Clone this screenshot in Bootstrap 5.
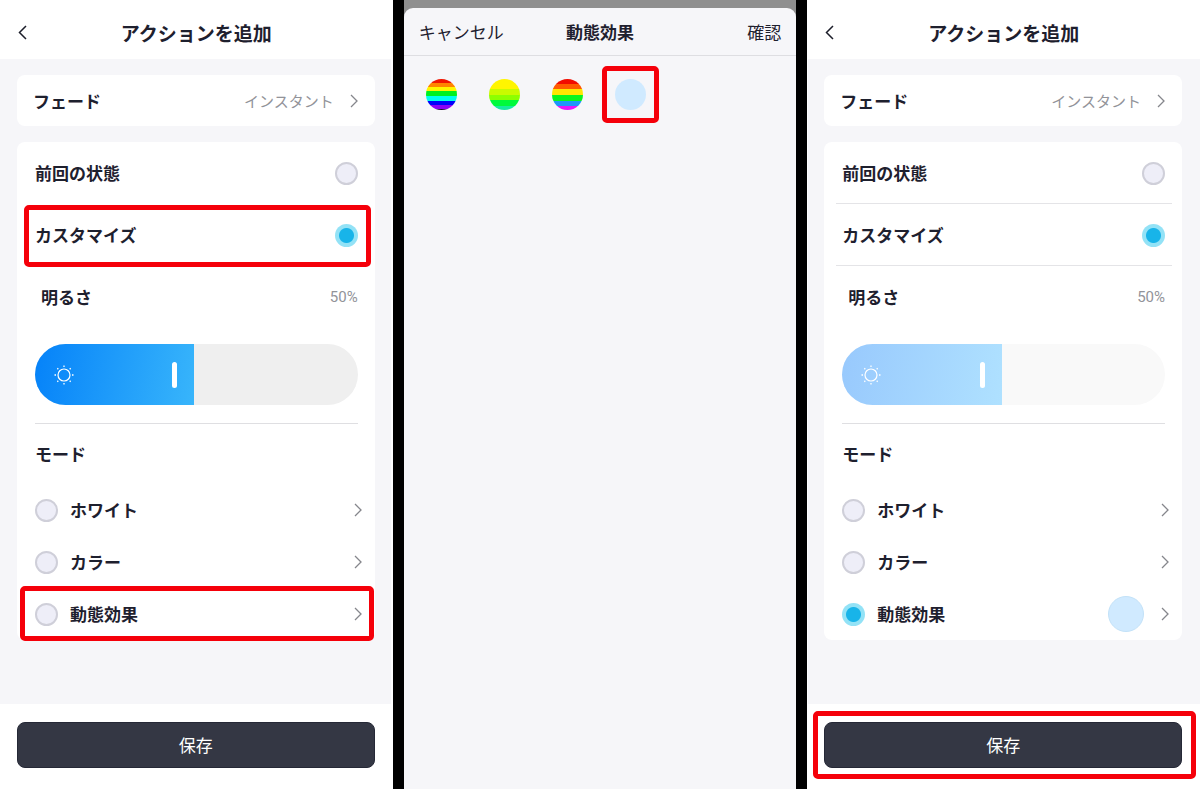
<!DOCTYPE html>
<html lang="ja">
<head>
<meta charset="utf-8">
<meta name="viewport" content="width=device-width, initial-scale=1">
<title>アクションを追加</title>
<link href="https://cdn.jsdelivr.net/npm/bootstrap@5.3.0/dist/css/bootstrap.min.css" rel="stylesheet">
<style>
  body { background: #000; color: #1e202e; font-family: "Noto Sans CJK JP", sans-serif; font-size: 17px; line-height: 24px; }
  .screens { gap: 11px; }
  .screen { flex: 1 1 0; min-width: 0; background: #f6f6f9; }
  .edge-end { border-right: 2px solid #fff; }
  .edge-start { border-left: 1px solid #fff; }
  .strong-text { font-weight: 600; }

  .bar { display: grid; grid-template-columns: 1fr auto 1fr; align-items: center; }
  .top-bar { height: 59px; padding: 6px 18px 0; background: #fff; }
  .top-bar h1 { margin: 0; font-size: 19px; line-height: 28px; font-weight: 600; }
  .plain { border: 0; background: none; padding: 0; color: inherit; line-height: 24px; }
  .back svg { display: block; }

  .content { padding: 16px 18px 16px 17px; gap: 16px; }
  .panel { border-radius: 8px; background: #fff; }
  .line-row { display: flex; align-items: center; position: relative; width: 100%; }
  .fade-row { height: 51px; padding: 0 17px 0 16px; font-size: 17px; text-align: start; }
  .pick-row { height: 62px; padding: 0 17px 0 18px; }
  .mode-row { height: 52px; padding: 0 13px 0 18px; }
  .title-row { height: 60px; padding: 0 18px; }
  .bright-row { padding-left: 24px; }
  .lined::before { content: ""; position: absolute; inset: auto 10px 0 12px; height: 1px; background: #e4e4e7; }
  .rule { height: 1px; margin: 18px 17px 0 18px; background: #dfdfe2; }
  .hint { color: #929399; font-size: 15px; }
  .percent { font-family: Roboto, sans-serif; }
  .chev { flex: none; }

  .dot.form-check-input { width: 23px; height: 23px; margin: 0; flex: none; border: 2px solid #cfcfd9; background: #eeeef8; }
  .dot.form-check-input:checked { border: 0; background: radial-gradient(circle, #18b4e9 0 7px, #93e2f6 8px); }

  .dimmer { position: relative; height: 61px; margin: 16px 17px 0 18px; border-radius: 31px; overflow: hidden; }
  .dimmer input { appearance: none; display: block; width: 100%; height: 100%; margin: 0; background: #efefef; }
  .dimmer input::-webkit-slider-thumb { appearance: none; width: 1px; height: 61px; background: transparent; }
  .dimmer-fill { position: absolute; inset: 0 auto 0 0; display: flex; align-items: center; justify-content: space-between; padding: 0 17px 0 19px; background: linear-gradient(100deg, #0582f9, #38b5fb); pointer-events: none; }
  .grip { width: 5px; height: 26px; border-radius: 3px; background: #fff; }
  .dimmer.off input { background: #f9f9f9; }
  .dimmer.off .dimmer-fill { background: linear-gradient(100deg, #98c9fd, #afe1ff); }

  .marked::after { content: ""; position: absolute; border: 5px solid #f5000a; border-radius: 5px; pointer-events: none; z-index: 1; }
  .mark-pick::after { inset: 1px 4px -1px 7px; }
  .mark-mode::after { inset: -2px 1px -1px 3px; }
  .mark-save::after { inset: -11px -14px -11px -11px; }
  .mark-swatch::after { inset: -13px; }

  .bottom-bar { padding: 18px 18px 21px 17px; background: #fff; }
  .save.btn { --bs-btn-font-size: 17px; --bs-btn-line-height: 24px; height: 46px; background: #343744; border: 1px solid #252836; border-radius: 8px; color: #fff; }

  .backdrop { background: #8f8f8f; padding-top: 8px; }
  .sheet { border-radius: 9px 9px 0 0; background: #f6f6f9; }
  .sheet-bar { height: 48px; padding: 0 15px; border-bottom: 1px solid #dedee2; }
  .sheet-bar h2 { margin: 0; font-size: 17px; line-height: 24px; font-weight: 600; }
  .swatches { padding: 23px 22px; gap: 32px; }
  .swatch { display: block; position: relative; width: 31px; height: 31px; padding: 0; border: 0; border-radius: 50%; }
  .rainbow { background: linear-gradient(#f01400 13%, #ff8400 13% 27%, #fff500 27% 40%, #00f020 40% 55%, #00fff0 55% 70%, #0000fa 70% 83%, #8a00f5 83% 96%, #180030 96%); }
  .lime { background: linear-gradient(#fff500 33%, #c9fa00 33% 50%, #8cff00 50% 68%, #00fa3c 68% 87%, #16eba0 87%); }
  .party { background: linear-gradient(#f20c00 15%, #ff5a00 15% 32%, #ffe600 32% 50%, #0af51e 50% 70%, #1e96fa 70% 86%, #e614fa 86%); }
  .ice { background: #d0eaff; }
  .current { width: 36px; height: 36px; margin-right: 17px; border: 1px solid #c3e2f8; }
</style>
</head>
<body>
<svg class="d-none" aria-hidden="true">
  <symbol id="chevron" viewBox="0 0 8 14"><path d="M1 1l6 6-6 6" fill="none" stroke="#85868c" stroke-width="1.3"/></symbol>
  <symbol id="back" viewBox="0 0 9 15"><path d="M8 1L1.500 7.500 8 14" fill="none" stroke="#1c1e2a" stroke-width="1.5"/></symbol>
  <symbol id="sun" viewBox="0 0 20 20">
    <circle cx="10" cy="10" r="6" fill="none" stroke="#fff" stroke-width="1.2"/>
    <path d="M10 .5v1.500M10 18v1.500M.5 10H2M18 10h1.500M3.300 3.300l1 1M15.700 15.700l1 1M16.700 3.300l-1 1M4.300 15.700l-1 1" stroke="#fff" stroke-width="1.3"/>
  </symbol>
</svg>

<div class="screens d-flex flex-column flex-md-row min-vh-100">

  <section class="screen d-flex flex-column">
    <header class="bar top-bar">
      <a href="#" class="back" aria-label="戻る"><svg width="9" height="15"><use href="#back"/></svg></a>
      <h1>アクションを追加</h1>
    </header>
    <main class="content edge-end d-flex flex-column flex-grow-1 pe-3">
      <button type="button" class="plain panel line-row fade-row">
        <span class="strong-text me-auto">フェード</span><span class="hint">インスタント</span>
        <svg class="chev ms-3" width="8" height="14"><use href="#chevron"/></svg>
      </button>
      <div class="panel">
        <div class="line-row pick-row">
          <label class="strong-text me-auto" for="a-last">前回の状態</label>
          <input class="form-check-input dot" type="radio" name="a-state" id="a-last">
        </div>
        <div class="line-row pick-row marked mark-pick">
          <label class="strong-text me-auto" for="a-custom">カスタマイズ</label>
          <input class="form-check-input dot" type="radio" name="a-state" id="a-custom" checked>
        </div>
        <div class="line-row pick-row bright-row">
          <label class="strong-text me-auto" for="a-bright">明るさ</label><span class="hint percent">50%</span>
        </div>
        <div class="dimmer">
          <input type="range" id="a-bright" min="0" max="100" value="50">
          <div class="dimmer-fill" style="width: calc(50% - 2px)"><svg width="20" height="20"><use href="#sun"/></svg><span class="grip"></span></div>
        </div>
        <div class="rule"></div>
        <div class="line-row title-row strong-text">モード</div>
        <div class="line-row mode-row">
          <input class="form-check-input dot" type="radio" name="a-mode" id="a-white">
          <label class="strong-text ms-2 ps-1 me-auto" for="a-white">ホワイト</label>
          <svg class="chev" width="8" height="14"><use href="#chevron"/></svg>
        </div>
        <div class="line-row mode-row">
          <input class="form-check-input dot" type="radio" name="a-mode" id="a-color">
          <label class="strong-text ms-2 ps-1 me-auto" for="a-color">カラー</label>
          <svg class="chev" width="8" height="14"><use href="#chevron"/></svg>
        </div>
        <div class="line-row mode-row marked mark-mode">
          <input class="form-check-input dot" type="radio" name="a-mode" id="a-effect">
          <label class="strong-text ms-2 ps-1 me-auto" for="a-effect">動態効果</label>
          <svg class="chev" width="8" height="14"><use href="#chevron"/></svg>
        </div>
      </div>
    </main>
    <footer class="bottom-bar">
      <button type="button" class="btn save w-100">保存</button>
    </footer>
  </section>

  <section class="screen backdrop d-flex flex-column">
    <div class="sheet flex-grow-1">
      <header class="bar sheet-bar">
        <button type="button" class="plain text-start">キャンセル</button>
        <h2>動態効果</h2>
        <button type="button" class="plain text-end">確認</button>
      </header>
      <div class="swatches d-flex flex-wrap">
        <button type="button" class="swatch rainbow" aria-label="レインボー"></button>
        <button type="button" class="swatch lime" aria-label="ライム"></button>
        <button type="button" class="swatch party" aria-label="パーティー"></button>
        <button type="button" class="swatch ice marked mark-swatch" aria-label="アイス"></button>
      </div>
    </div>
  </section>

  <section class="screen d-flex flex-column">
    <header class="bar top-bar">
      <a href="#" class="back" aria-label="戻る"><svg width="9" height="15"><use href="#back"/></svg></a>
      <h1>アクションを追加</h1>
    </header>
    <main class="content edge-start d-flex flex-column flex-grow-1 ps-3">
      <button type="button" class="plain panel line-row fade-row">
        <span class="strong-text me-auto">フェード</span><span class="hint">インスタント</span>
        <svg class="chev ms-3" width="8" height="14"><use href="#chevron"/></svg>
      </button>
      <div class="panel">
        <div class="line-row pick-row lined">
          <label class="strong-text me-auto" for="b-last">前回の状態</label>
          <input class="form-check-input dot" type="radio" name="b-state" id="b-last">
        </div>
        <div class="line-row pick-row lined">
          <label class="strong-text me-auto" for="b-custom">カスタマイズ</label>
          <input class="form-check-input dot" type="radio" name="b-state" id="b-custom" checked>
        </div>
        <div class="line-row pick-row bright-row">
          <label class="strong-text me-auto" for="b-bright">明るさ</label><span class="hint percent">50%</span>
        </div>
        <div class="dimmer off">
          <input type="range" id="b-bright" min="0" max="100" value="50" disabled>
          <div class="dimmer-fill" style="width: calc(50% - 2px)"><svg width="20" height="20"><use href="#sun"/></svg><span class="grip"></span></div>
        </div>
        <div class="rule"></div>
        <div class="line-row title-row strong-text">モード</div>
        <div class="line-row mode-row">
          <input class="form-check-input dot" type="radio" name="b-mode" id="b-white">
          <label class="strong-text ms-2 ps-1 me-auto" for="b-white">ホワイト</label>
          <svg class="chev" width="8" height="14"><use href="#chevron"/></svg>
        </div>
        <div class="line-row mode-row">
          <input class="form-check-input dot" type="radio" name="b-mode" id="b-color">
          <label class="strong-text ms-2 ps-1 me-auto" for="b-color">カラー</label>
          <svg class="chev" width="8" height="14"><use href="#chevron"/></svg>
        </div>
        <div class="line-row mode-row">
          <input class="form-check-input dot" type="radio" name="b-mode" id="b-effect" checked>
          <label class="strong-text ms-2 ps-1 me-auto" for="b-effect">動態効果</label>
          <span class="swatch ice current"></span>
          <svg class="chev" width="8" height="14"><use href="#chevron"/></svg>
        </div>
      </div>
    </main>
    <footer class="bottom-bar">
      <div class="position-relative marked mark-save"><button type="button" class="btn save w-100">保存</button></div>
    </footer>
  </section>

</div>
<script src="https://cdn.jsdelivr.net/npm/bootstrap@5.3.0/dist/js/bootstrap.bundle.min.js"></script>
</body>
</html>
